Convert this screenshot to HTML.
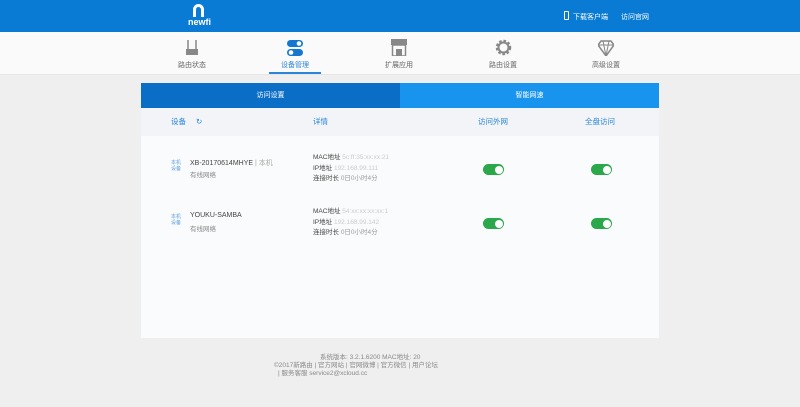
<!DOCTYPE html>
<html><head><meta charset="utf-8"><style>
*{margin:0;padding:0;box-sizing:border-box}
body{width:800px;height:407px;background:#efefef;font-family:"Liberation Sans","Noto Sans CJK SC",sans-serif;font-size:7px;color:#666;position:relative;overflow:hidden}
.abs{position:absolute}
.hdr{left:0;top:0;width:800px;height:32px;background:#0a7bd5}
.nav{left:0;top:32px;width:800px;height:43px;background:#fafafa;border-bottom:1px solid #e6e6e6}
.ni{position:absolute;top:6px;width:60px;text-align:center;color:#666;font-size:7px}
.ni .ic{height:18px;margin:0 auto 4px;display:flex;justify-content:center;align-items:flex-end}
.panel{left:141px;top:83px;width:518px;height:255px;background:#fafbfc}
.t1{left:0;top:0;width:259px;height:25px;background:#0a6ec6;color:#fff;text-align:center;line-height:25px}
.t2{left:259px;top:0;width:259px;height:25px;background:#1994ee;color:#fff;text-align:center;line-height:25px}
.ch{left:0;top:25px;width:518px;height:28px;background:#f2f4f7;color:#2a85d8;font-size:7.5px;line-height:28px}
.tog{position:absolute;width:21px;height:11px;border-radius:6px;background:#2aa84a}
.tog:after{content:"";position:absolute;right:1.5px;top:1.5px;width:8px;height:8px;border-radius:50%;background:#fff}
.dev{color:#444;font-size:7px}
.sub{color:#888;font-size:6.5px}
.tag{color:#5b9ee0;font-size:5px;line-height:6px}
</style></head><body>
<div class="abs hdr">
 <div class="abs" style="left:193px;top:4px;width:11px;height:13px;border:3px solid #fff;border-bottom:none;border-radius:6px 6px 0 0"></div>
 <div class="abs" style="left:188px;top:17px;color:#fff;font-size:9px;font-weight:bold">newfi</div>
 <div class="abs" style="left:564px;top:11px;width:5px;height:9px;border:1.5px solid #fff;border-radius:1px"></div>
 <div class="abs" style="left:573px;top:12px;color:#fff;font-size:7px">下载客户端</div>
 <div class="abs" style="left:621px;top:12px;color:#fff;font-size:7px">访问官网</div>
</div>
<div class="abs nav">
 <div class="ni" style="left:162px"><div class="ic"><svg width="14" height="16"><path d="M3 0v10M11 0v10" stroke="#888" stroke-width="1.5"/><rect x="1" y="9" width="12" height="6" fill="#888"/></svg></div>路由状态</div>
 <div class="ni" style="left:265px"><div class="ic"><svg width="16" height="16"><rect x="0" y="0" width="16" height="7" rx="3.5" fill="#1677d0"/><rect x="0" y="9" width="16" height="7" rx="3.5" fill="#1677d0"/><circle cx="12" cy="3.5" r="2.3" fill="#fff"/><circle cx="4" cy="12.5" r="2.3" fill="#fff"/></svg></div><span style="color:#2a85d8">设备管理</span></div>
 <div class="abs" style="left:269px;top:40px;width:52px;height:2px;background:#2a85d8"></div>
 <div class="ni" style="left:369px"><div class="ic"><svg width="16" height="17"><rect x="0" y="0" width="16" height="6" fill="#888"/><rect x="1.5" y="6" width="13" height="11" fill="none" stroke="#888" stroke-width="1.5"/><rect x="5" y="10" width="6" height="7" fill="#888"/></svg></div>扩展应用</div>
 <div class="ni" style="left:473px"><div class="ic"><svg width="17" height="17"><circle cx="8.5" cy="8.5" r="6" fill="none" stroke="#888" stroke-width="3.5" stroke-dasharray="2.4 1.6"/><circle cx="8.5" cy="8.5" r="5" fill="none" stroke="#888" stroke-width="2"/></svg></div>路由设置</div>
 <div class="ni" style="left:576px"><div class="ic"><svg width="16" height="16"><path d="M3 1h10l3 4-8 11-8-11z" fill="none" stroke="#888" stroke-width="1.5"/><path d="M0 5h16M5 1l3 15 3-15" stroke="#888" stroke-width="1" fill="none"/></svg></div>高级设置</div>
</div>
<div class="abs panel">
 <div class="abs t1">访问设置</div><div class="abs t2">智能网速</div>
 <div class="abs" style="left:125px;top:24px;width:0;height:0;border:4px solid transparent;border-top-color:#0a6ec6"></div>
 <div class="abs ch"><span class="abs" style="left:30px">设备</span><span class="abs" style="left:55px">↻</span><span class="abs" style="left:172px">详情</span><span class="abs" style="left:337px">访问外网</span><span class="abs" style="left:444px">全盘访问</span></div>
 <div class="abs tag" style="left:30px;top:77px">本机<br>设备</div>
 <div class="abs dev" style="left:49px;top:75px">XB-20170614MHYE <span style="color:#aaa">| 本机</span></div>
 <div class="abs sub" style="left:49px;top:86px">有线网络</div>
 <div class="abs dev" style="left:172px;top:70px;line-height:10.5px;font-size:6.5px">MAC地址 <span style="color:#ccc">5c:ff:35:xx:xx:21</span><br>IP地址 <span style="color:#ccc">192.168.99.111</span><br>连接时长 <span style="color:#999">0日0小时4分</span></div>
 <div class="tog" style="left:342px;top:81px"></div><div class="tog" style="left:450px;top:81px"></div>
 <div class="abs tag" style="left:30px;top:131px">本机<br>设备</div>
 <div class="abs dev" style="left:49px;top:129px">YOUKU-SAMBA</div>
 <div class="abs sub" style="left:49px;top:140px">有线网络</div>
 <div class="abs dev" style="left:172px;top:124px;line-height:10.5px;font-size:6.5px">MAC地址 <span style="color:#ccc">54:xx:xx:xx:xx:1</span><br>IP地址 <span style="color:#ccc">192.168.99.142</span><br>连接时长 <span style="color:#999">0日0小时4分</span></div>
 <div class="tog" style="left:342px;top:135px"></div><div class="tog" style="left:450px;top:135px"></div>
</div>
<div class="abs" style="left:320px;top:351px;color:#888;font-size:6.5px">系统版本: 3.2.1.6200 MAC地址: 20</div>
<div class="abs" style="left:274px;top:359px;color:#888;font-size:6.5px">©2017新路由 | 官方网站 | 官网微博 | 官方微信 | 用户论坛</div>
<div class="abs" style="left:278px;top:367px;color:#888;font-size:6.5px">| 服务客服 service2@xcloud.cc</div>
</body></html>
